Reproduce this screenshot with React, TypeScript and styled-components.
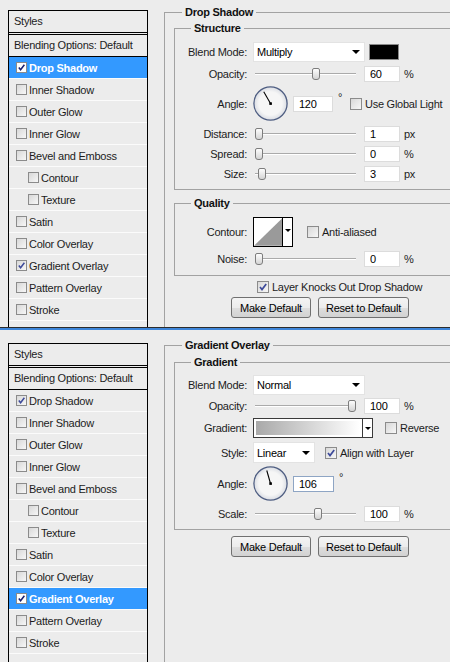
import React from 'react';
import styled, { createGlobalStyle } from 'styled-components';

const GlobalStyle = createGlobalStyle`
  html, body { margin: 0; padding: 0; background: #ececec; }
  body {
    font-family: "Liberation Sans", Arial, sans-serif;
    font-size: 11px;
    letter-spacing: -0.25px;
    color: #1c1c1c;
  }
  * { box-sizing: border-box; }
`;

const Screen = styled.div`
  width: 450px;
  height: 662px;
  display: flex;
  flex-direction: column;
  overflow: hidden;
  background: #ececec;
`;

const Panel = styled.section<{ $height?: number }>`
  display: flex;
  align-items: flex-start;
  flex: ${p => (p.$height ? `0 0 ${p.$height}px` : '1 1 auto')};
  overflow: hidden;
`;

const Divider = styled.div`
  flex: 0 0 3px;
  border-top: 1px solid #2c2c2c;
  background: #3e86da;
`;

/* ---------- styles list ---------- */

const Sidebar = styled.ul<{ $top: number }>`
  list-style: none;
  margin: ${p => p.$top}px 0 0 8px;
  padding: 0;
  width: 140px;
  flex-shrink: 0;
  align-self: stretch;
  border: 1px solid #000;
  border-bottom: none;
`;

const SidebarHeader = styled.li`
  height: 24px;
  line-height: 21px;
  padding-left: 5px;
  border-bottom: 3px double #000;
`;

const BlendingRow = styled.li`
  height: 22px;
  line-height: 21px;
  padding-left: 5px;
  border-bottom: 1px solid #000;
`;

const StyleItem = styled.li<{ $sub?: boolean; $selected?: boolean }>`
  display: flex;
  align-items: center;
  gap: 2px;
  height: 22px;
  padding-left: ${p => (p.$sub ? 19 : 7)}px;
  border-bottom: 1px solid #fbfbfb;
  background: ${p => (p.$selected ? '#3399ff' : 'transparent')};
  color: ${p => (p.$selected ? '#fff' : '#1c1c1c')};
  font-weight: ${p => (p.$selected ? 'bold' : 'normal')};
`;

const Box = styled.span<{ $size: number; $white?: boolean }>`
  display: inline-flex;
  align-items: center;
  justify-content: center;
  flex-shrink: 0;
  width: ${p => p.$size}px;
  height: ${p => p.$size}px;
  border: 1px solid #8b8b8b;
  background: ${p => (p.$white ? '#fff' : 'linear-gradient(135deg, #d8d8d8 0%, #f7f7f7 100%)')};
`;

function Check({ checked, size, white }: { checked?: boolean; size: number; white?: boolean }) {
  return (
    <Box $size={size} $white={white}>
      {checked && (
        <svg width={size - 2} height={size - 2} viewBox="0 0 10 10">
          <path d="M2 5 L4 7.5 L8.2 2" fill="none" stroke={white ? '#1a1f6e' : '#3d4a9a'} strokeWidth="1.7" />
        </svg>
      )}
    </Box>
  );
}

type StyleEntry = { name: string; sub?: boolean };

const styleEntries: StyleEntry[] = [
  { name: 'Drop Shadow' },
  { name: 'Inner Shadow' },
  { name: 'Outer Glow' },
  { name: 'Inner Glow' },
  { name: 'Bevel and Emboss' },
  { name: 'Contour', sub: true },
  { name: 'Texture', sub: true },
  { name: 'Satin' },
  { name: 'Color Overlay' },
  { name: 'Gradient Overlay' },
  { name: 'Pattern Overlay' },
  { name: 'Stroke' },
];

const checkedStyles = ['Drop Shadow', 'Gradient Overlay'];

function StylesList({ top, selected }: { top: number; selected: string }) {
  return (
    <Sidebar $top={top}>
      <SidebarHeader>Styles</SidebarHeader>
      <BlendingRow>Blending Options: Default</BlendingRow>
      {styleEntries.map(s => {
        const isSel = s.name === selected;
        return (
          <StyleItem key={s.name} $sub={s.sub} $selected={isSel}>
            <Check size={11} checked={checkedStyles.includes(s.name)} white={isSel} />
            {s.name}
          </StyleItem>
        );
      })}
    </Sidebar>
  );
}

/* ---------- settings ---------- */

const Content = styled.div`
  flex: 1;
  align-self: stretch;
  margin-left: 16px;
  overflow: hidden;
`;

const OuterGroup = styled.fieldset<{ $top: number }>`
  margin: ${p => p.$top}px 0 0 0;
  padding: 0 0 0 9px;
  width: 320px;
  height: 420px;
  border: 1px solid #a2a2a2;
  min-inline-size: auto;
`;

const Group = styled.fieldset<{ $top: number; $bottom: number }>`
  margin: ${p => p.$top}px 0 0 0;
  padding: 0 0 ${p => p.$bottom}px 0;
  width: 309px;
  border: 1px solid #a2a2a2;
  min-inline-size: auto;
`;

const Legend = styled.legend<{ $indent: number }>`
  margin-left: ${p => p.$indent}px;
  padding: 0 3px;
  font-weight: bold;
  line-height: 14px;
  color: #111;
`;

const Row = styled.div<{ $h: number; $mt: number; $ml?: number }>`
  display: flex;
  align-items: center;
  height: ${p => p.$h}px;
  margin-top: ${p => p.$mt}px;
  margin-left: ${p => p.$ml ?? 0}px;
`;

const Label = styled.span`
  width: 72px;
  margin-right: 6px;
  text-align: right;
  flex-shrink: 0;
`;

const Select = styled.div<{ $w: number; $h: number }>`
  display: flex;
  align-items: center;
  justify-content: space-between;
  width: ${p => p.$w}px;
  height: ${p => p.$h}px;
  padding: 0 4px 0 3px;
  background: #fff;
  border: 1px solid #e3e3e3;
  flex-shrink: 0;
  color: #000;
`;

const Arrow = styled.span`
  width: 0;
  height: 0;
  border-left: 4px solid transparent;
  border-right: 4px solid transparent;
  border-top: 4px solid #000;
`;

const Swatch = styled.span`
  width: 30px;
  height: 16px;
  margin-left: 4px;
  background: #000;
  border: 1px solid #8a8a8a;
`;

const Track = styled.div`
  position: relative;
  width: 101px;
  height: 14px;
  margin-left: 2px;
  flex-shrink: 0;
  &::before {
    content: '';
    position: absolute;
    left: 0;
    right: 0;
    top: 6px;
    height: 1px;
    background: #aaaaaa;
    box-shadow: 0 1px 0 #fff;
  }
`;

const Thumb = styled.span`
  position: absolute;
  top: 1px;
  width: 8px;
  height: 12px;
  border: 1px solid #7d7d7d;
  border-radius: 2px 2px 3px 3px;
  background: linear-gradient(#fdfdfd, #d4d4d4);
`;

function Slider({ pos }: { pos: number }) {
  return (
    <Track>
      <Thumb style={{ left: `${Math.round(pos * 93)}px` }} />
    </Track>
  );
}

const Field = styled.input<{ $w?: number; $ml?: number; $focus?: boolean }>`
  width: ${p => p.$w ?? 36}px;
  height: 16px;
  margin: 0 0 0 ${p => p.$ml ?? 8}px;
  padding: 0 0 0 5px;
  border: 1px solid ${p => (p.$focus ? '#8ea5c4' : '#dcdcdc')};
  background: #fff;
  font: inherit;
  letter-spacing: inherit;
  color: #000;
  outline: none;
  flex-shrink: 0;
`;

const Unit = styled.span`
  margin-left: 4px;
`;

const Degree = styled.span`
  align-self: flex-start;
  margin: 5px 0 0 5px;
  width: 4px;
`;

const CheckLabel = styled.label<{ $ml: number }>`
  display: flex;
  align-items: center;
  gap: 3px;
  margin-left: ${p => p.$ml}px;
  white-space: nowrap;
`;

function Dial({ angle, id }: { angle: number; id: string }) {
  const rad = (angle * Math.PI) / 180;
  const x = 17.5 + Math.cos(rad) * 13.5;
  const y = 17.5 - Math.sin(rad) * 13.5;
  return (
    <svg width="35" height="35" viewBox="0 0 35 35" style={{ flexShrink: 0 }}>
      <defs>
        <radialGradient id={id} cx="50%" cy="50%" r="50%">
          <stop offset="70%" stopColor="#f6f6f6" />
          <stop offset="100%" stopColor="#d9dce3" />
        </radialGradient>
      </defs>
      <circle cx="17.5" cy="17.5" r="16.6" fill={`url(#${id})`} stroke="#4f5e82" strokeWidth="1.3" />
      <line x1="17.5" y1="17.5" x2={x} y2={y} stroke="#000" strokeWidth="1.1" />
      <rect x="16.3" y="16.3" width="2.6" height="2.6" fill="#000" />
    </svg>
  );
}

const ContourBox = styled.div`
  display: flex;
  width: 40px;
  height: 30px;
  border: 1px solid #000;
  background: #fff;
  flex-shrink: 0;
`;

const ContourArrow = styled.div`
  display: flex;
  align-items: flex-start;
  justify-content: center;
  width: 10px;
  padding-top: 11px;
  border-left: 1px solid #000;
`;

const SmallArrow = styled.span`
  width: 0;
  height: 0;
  border-left: 3px solid transparent;
  border-right: 3px solid transparent;
  border-top: 3px solid #000;
`;

const GradientBox = styled.div`
  display: flex;
  width: 120px;
  height: 20px;
  border: 1px solid #3a3a3a;
  background: #fff;
  flex-shrink: 0;
`;

const GradientFill = styled.div`
  flex: 1;
  margin: 2px;
  background: linear-gradient(to right, #a9a9a9, #ffffff);
`;

const GradientArrow = styled.div`
  display: flex;
  align-items: center;
  justify-content: center;
  width: 10px;
  border-left: 1px solid #3a3a3a;
`;

const Buttons = styled.div<{ $mt: number }>`
  display: flex;
  gap: 7px;
  margin: ${p => p.$mt}px 0 0 57px;
`;

const Button = styled.button<{ $w: number }>`
  width: ${p => p.$w}px;
  height: 21px;
  padding: 0;
  font: inherit;
  letter-spacing: inherit;
  color: #000;
  border: 1px solid #707070;
  border-radius: 3px;
  background: linear-gradient(#f4f4f4 0%, #ececec 50%, #dedede 51%, #d2d2d2 100%);
`;

function DialogButtons({ mt }: { mt: number }) {
  return (
    <Buttons $mt={mt}>
      <Button $w={80}>Make Default</Button>
      <Button $w={91}>Reset to Default</Button>
    </Buttons>
  );
}

function DropShadowSettings() {
  return (
    <Content>
      <OuterGroup $top={5}>
        <Legend $indent={8}>Drop Shadow</Legend>
        <Group $top={2} $bottom={7}>
          <Legend $indent={16}>Structure</Legend>
          <Row $h={20} $mt={7}>
            <Label>Blend Mode:</Label>
            <Select $w={112} $h={20}>Multiply<Arrow /></Select>
            <Swatch />
          </Row>
          <Row $h={16} $mt={4}>
            <Label>Opacity:</Label>
            <Slider pos={0.61} />
            <Field readOnly value="60" />
            <Unit>%</Unit>
          </Row>
          <Row $h={35} $mt={4}>
            <Label>Angle:</Label>
            <Dial angle={120} id="dial-a" />
            <Field readOnly value="120" $w={40} $ml={5} />
            <Degree>°</Degree>
            <CheckLabel $ml={8}><Check size={12} />Use Global Light</CheckLabel>
          </Row>
          <Row $h={16} $mt={5}>
            <Label>Distance:</Label>
            <Slider pos={0} />
            <Field readOnly value="1" />
            <Unit>px</Unit>
          </Row>
          <Row $h={16} $mt={4}>
            <Label>Spread:</Label>
            <Slider pos={0} />
            <Field readOnly value="0" />
            <Unit>%</Unit>
          </Row>
          <Row $h={16} $mt={4}>
            <Label>Size:</Label>
            <Slider pos={0.03} />
            <Field readOnly value="3" />
            <Unit>px</Unit>
          </Row>
        </Group>
        <Group $top={6} $bottom={8}>
          <Legend $indent={16}>Quality</Legend>
          <Row $h={30} $mt={7}>
            <Label>Contour:</Label>
            <ContourBox>
              <svg width="29" height="28" viewBox="0 0 29 28">
                <polygon points="0,28 29,0 29,28" fill="#9a9a9a" />
              </svg>
              <ContourArrow><SmallArrow /></ContourArrow>
            </ContourBox>
            <CheckLabel $ml={14}><Check size={12} />Anti-aliased</CheckLabel>
          </Row>
          <Row $h={16} $mt={4}>
            <Label>Noise:</Label>
            <Slider pos={0} />
            <Field readOnly value="0" />
            <Unit>%</Unit>
          </Row>
        </Group>
        <Row $h={12} $mt={5} $ml={83}>
          <CheckLabel $ml={0}><Check size={12} checked />Layer Knocks Out Drop Shadow</CheckLabel>
        </Row>
        <DialogButtons mt={4} />
      </OuterGroup>
    </Content>
  );
}

function GradientSettings() {
  return (
    <Content>
      <OuterGroup $top={8}>
        <Legend $indent={8}>Gradient Overlay</Legend>
        <Group $top={3} $bottom={7}>
          <Legend $indent={16}>Gradient</Legend>
          <Row $h={20} $mt={6}>
            <Label>Blend Mode:</Label>
            <Select $w={112} $h={20}>Normal<Arrow /></Select>
          </Row>
          <Row $h={16} $mt={3}>
            <Label>Opacity:</Label>
            <Slider pos={1} />
            <Field readOnly value="100" />
            <Unit>%</Unit>
          </Row>
          <Row $h={20} $mt={4}>
            <Label>Gradient:</Label>
            <GradientBox>
              <GradientFill />
              <GradientArrow><SmallArrow /></GradientArrow>
            </GradientBox>
            <CheckLabel $ml={12}><Check size={12} />Reverse</CheckLabel>
          </Row>
          <Row $h={21} $mt={4}>
            <Label>Style:</Label>
            <Select $w={62} $h={21}>Linear<Arrow /></Select>
            <CheckLabel $ml={10}><Check size={12} checked />Align with Layer</CheckLabel>
          </Row>
          <Row $h={35} $mt={3}>
            <Label>Angle:</Label>
            <Dial angle={106} id="dial-b" />
            <Field readOnly value="106" $w={41} $ml={5} $focus />
            <Degree>°</Degree>
          </Row>
          <Row $h={16} $mt={5}>
            <Label>Scale:</Label>
            <Slider pos={0.63} />
            <Field readOnly value="100" />
            <Unit>%</Unit>
          </Row>
        </Group>
        <DialogButtons mt={6} />
      </OuterGroup>
    </Content>
  );
}

export default function App() {
  return (
    <>
      <GlobalStyle />
      <Screen>
        <Panel $height={327}>
          <StylesList top={10} selected="Drop Shadow" />
          <DropShadowSettings />
        </Panel>
        <Divider />
        <Panel>
          <StylesList top={13} selected="Gradient Overlay" />
          <GradientSettings />
        </Panel>
      </Screen>
    </>
  );
}
